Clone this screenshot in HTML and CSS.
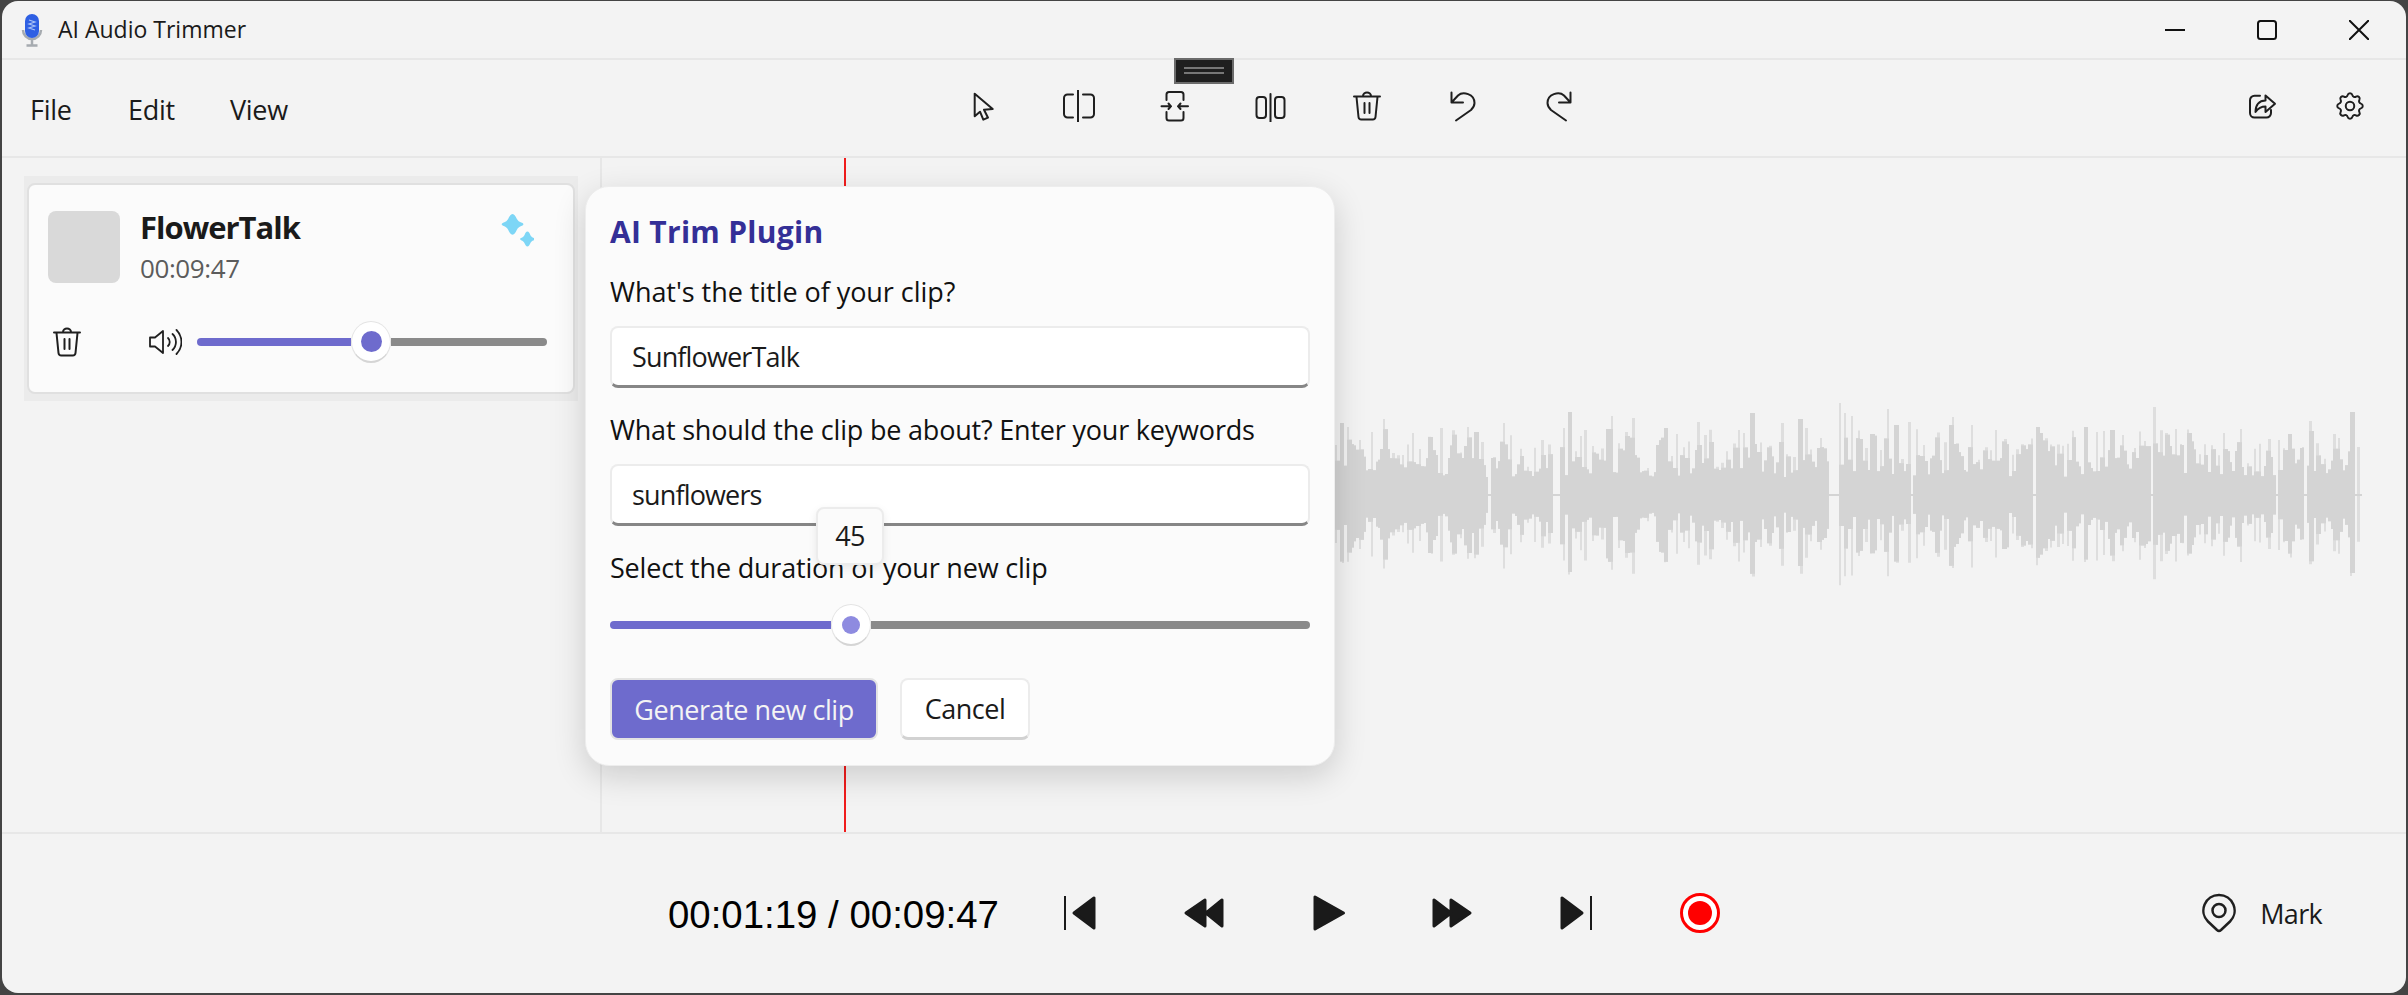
FILE: index.html
```html
<!DOCTYPE html>
<html lang="en">
<head>
    <meta charset="UTF-8">
    <meta name="viewport" content="width=device-width, initial-scale=1.0">
    <title>AI Audio Trimmer</title>
    <link rel="stylesheet" href="styles.css">
</head>
<body>
    <div class="window">
        <!-- Title bar -->
        <header class="titlebar">
            <svg class="app-icon" viewBox="0 0 24 34" width="24" height="34">
                <path d="M3 17a9 9 0 0 0 18 0M12 26v6M6.500 32.500h11" fill="none" stroke="#a6abb0" stroke-width="2.500"/>
                <rect x="5" y="1" width="14" height="24" rx="7" fill="#2e5fe3"/>
                <path d="M9 7l6 2-6 2 6 2-6 2 6 2" fill="none" stroke="#a9c2f5" stroke-width="1.200"/>
            </svg>
            <span class="app-name">AI Audio Trimmer</span>
            <div class="win-controls">
                <svg viewBox="0 0 20 20" width="20" height="20"><path d="M0 10h20" stroke="#111" stroke-width="2"/></svg>
                <svg viewBox="0 0 20 20" width="20" height="20"><rect x="1" y="1" width="18" height="18" rx="2.500" fill="none" stroke="#111" stroke-width="2"/></svg>
                <svg viewBox="0 0 20 20" width="20" height="20"><path d="M0 0l20 20M20 0L0 20" stroke="#111" stroke-width="2"/></svg>
            </div>
        </header>

        <!-- Toolbar -->
        <nav class="toolbar">
            <div class="grip"><span></span><span></span></div>
            <div class="menu">
                <span class="menu-file">File</span>
                <span class="menu-edit">Edit</span>
                <span>View</span>
            </div>
            <div class="tools">
                <svg class="icon" viewBox="0 0 32 32"><path d="M7.700 3.700V26.300L13 21.700 16.300 29.700 21 27.700 17 19.700 25.700 19Z"/></svg>
                <svg class="icon" viewBox="0 0 32 32"><path d="M15 0V32M10 4.500H4.500a3.500 3.500 0 0 0-3.500 3.500V24a3.500 3.500 0 0 0 3.500 3.500H10M20 4.500h7.500a3.500 3.500 0 0 1 3.500 3.500V24a3.500 3.500 0 0 1-3.500 3.500H20"/></svg>
                <svg class="icon" viewBox="0 0 32 32"><path d="M7.500 10V4.500A2.500 2.500 0 0 1 10 2h12A2.500 2.500 0 0 1 24.500 4.500V10M7.500 22v6A2.500 2.500 0 0 0 10 30.500h12A2.500 2.500 0 0 0 24.500 28V22M2.500 16.300H12M9.500 13.500 12 16.300 9.500 19M29 16.300H19M21.500 13.500 19 16.300 21.500 19"/></svg>
                <svg class="icon" viewBox="0 0 32 32"><rect x="1.500" y="7" width="9.500" height="21" rx="3"/><rect x="20" y="7" width="9.500" height="21" rx="3"/><path d="M15.500 4V32"/></svg>
                <svg class="icon" viewBox="0 0 32 32"><path d="M3 6.500H29M12 6a4 3.500 0 0 1 8 0M5.500 7l2 20a2.800 2.800 0 0 0 2.800 2.500H21.700a2.800 2.800 0 0 0 2.800-2.500l2-20M13.500 13V23M18.500 13V23"/></svg>
                <svg class="icon" viewBox="0 0 32 32"><path d="M4.500 2.500V12.500H16M4.500 12.500 11 5.500C16 1 27.500 4 27.500 13 27.500 16 26 18 24 20L9 30.500"/></svg>
                <svg class="icon" viewBox="0 0 32 32"><path d="M27.500 2.500V12.500H16M27.500 12.500 21 5.500C16 1 4.500 4 4.500 13 4.500 16 6 18 8 20L23 30.500"/></svg>
            </div>
            <div class="tools-right">
                <svg class="icon" viewBox="0 0 32 32"><path d="M14 5.700H8.500A4.500 4.500 0 0 0 4 10.200V23a4.500 4.500 0 0 0 4.500 4.500h12a4.500 4.500 0 0 0 4.500-4.500v-3M19.500 5.500v5C13 10.500 9.500 15 9.500 22c2.500-3.500 5.500-5.500 10-5.500V22L29 13.800Z"/></svg>
                <svg class="icon gear" viewBox="0 0 24 24"><path d="M10.325 4.317c.426 -1.756 2.924 -1.756 3.35 0a1.724 1.724 0 0 0 2.573 1.066c1.543 -.94 3.31 .826 2.37 2.37a1.724 1.724 0 0 0 1.065 2.572c1.756 .426 1.756 2.924 0 3.35a1.724 1.724 0 0 0 -1.066 2.573c.94 1.543 -.826 3.31 -2.37 2.37a1.724 1.724 0 0 0 -2.572 1.065c-.426 1.756 -2.924 1.756 -3.35 0a1.724 1.724 0 0 0 -2.573 -1.066c-1.543 .94 -3.31 -.826 -2.37 -2.37a1.724 1.724 0 0 0 -1.065 -2.572c-1.756 -.426 -1.756 -2.924 0 -3.350a1.724 1.724 0 0 0 1.066 -2.573c-.94 -1.543 .826 -3.31 2.37 -2.37c1 .608 2.296 .07 2.572 -1.065z"/><circle cx="12" cy="12" r="3"/></svg>
            </div>
        </nav>

        <!-- Main area -->
        <main class="main">
            <aside class="sidebar">
                <div class="card-wrap">
                    <div class="card">
                        <div class="card-top">
                            <div class="thumb"></div>
                            <div class="card-info">
                                <div class="card-title">FlowerTalk</div>
                                <div class="card-time">00:09:47</div>
                            </div>
                            <svg class="sparkle" viewBox="0 0 36 36" width="34" height="34">
                                <path transform="translate(-3 0) scale(1.250 1)" d="M13 1c1.600 0 2.600 2.400 3.600 5 .9 2.200 2 3.200 4.400 4.400 1.600.8 1.600 2.400 0 3.200-2.400 1.200-3.500 2.200-4.400 4.400-1 2.600-2 5-3.600 5s-2.600-2.400-3.600-5c-.9-2.200-2-3.200-4.400-4.400-1.600-.8-1.600-2.400 0-3.200 2.400-1.200 3.500-2.200 4.400-4.400C10.400 3.400 11.400 1 13 1Z"/>
                                <path transform="translate(18 19) scale(.85 .72)" d="M13 1c1.600 0 2.600 2.400 3.600 5 .9 2.200 2 3.200 4.400 4.400 1.600.8 1.600 2.400 0 3.200-2.400 1.200-3.500 2.200-4.400 4.400-1 2.600-2 5-3.600 5s-2.600-2.400-3.600-5c-.9-2.200-2-3.200-4.400-4.400-1.600-.8-1.600-2.400 0-3.200 2.400-1.200 3.500-2.200 4.400-4.400C10.400 3.400 11.400 1 13 1Z"/>
                            </svg>
                        </div>
                        <div class="card-bottom">
                            <svg class="icon card-trash" viewBox="0 0 32 32"><path d="M3 6.500H29M12 6a4 3.500 0 0 1 8 0M5.500 7l2 20a2.800 2.800 0 0 0 2.800 2.500H21.700a2.800 2.800 0 0 0 2.800-2.500l2-20M13.500 13V23M18.500 13V23"/></svg>
                            <svg class="icon volume" viewBox="0 0 34 32"><path d="M2 11.500H7L15 5V27L7 20.500H2ZM20 12a5.500 5.500 0 0 1 0 8M24.500 8a11 11 0 0 1 0 16M28.500 4a17 17 0 0 1 0 24"/></svg>
                            <div class="slider slider-volume">
                                <div class="fill"></div>
                                <div class="thumb-knob"><span></span></div>
                                <div class="rest"></div>
                            </div>
                        </div>
                    </div>
                </div>
            </aside>

            <section class="canvas">
                <div class="playhead"></div>
                <svg class="wave" id="wave" height="200"></svg>
            </section>

            <!-- Plugin popup -->
            <form class="panel">
                <h2>AI Trim Plugin</h2>
                <label class="first">What's the title of your clip?</label>
                <div class="input">SunflowerTalk</div>
                <label>What should the clip be about? Enter your keywords</label>
                <div class="input">sunflowers</div>
                <label>Select the duration of your new clip</label>
                <div class="tooltip">45</div>
                <div class="slider slider-duration">
                    <div class="fill"></div>
                    <div class="thumb-knob"><span></span></div>
                    <div class="rest"></div>
                </div>
                <div class="buttons">
                    <button type="button" class="btn-primary">Generate new clip</button>
                    <button type="button" class="btn-cancel">Cancel</button>
                </div>
            </form>
        </main>

        <!-- Transport bar -->
        <footer class="transport">
            <div class="time">00:01:19 / 00:09:47</div>
            <div class="controls">
                <svg class="ctl" viewBox="0 0 40 40"><path class="thin" d="M5 3V37"/><path d="M34 5V35L14 20Z"/></svg>
                <svg class="ctl" viewBox="0 0 40 40"><path d="M21 7V33L2 20ZM38 7V33L22 20Z"/></svg>
                <svg class="ctl" viewBox="0 0 40 40"><path d="M7 4V36L35.500 20Z"/></svg>
                <svg class="ctl" viewBox="0 0 40 40"><path d="M2 7V33L19 20ZM19 7V33L38 20Z"/></svg>
                <svg class="ctl" viewBox="0 0 40 40"><path class="thin" d="M35 3V37"/><path d="M6 5V35L26 20Z"/></svg>
                <svg class="ctl" viewBox="0 0 40 40"><circle class="ring" cx="20" cy="20" r="18.500"/><circle class="dot" cx="20" cy="20" r="12"/></svg>
            </div>
            <div class="mark">
                <svg class="icon mark-icon" viewBox="0 0 34 40"><path d="M17 2a15.500 15.500 0 0 1 11 26.500L19 37a3 3 0 0 1-4 0L6 28.500A15.500 15.500 0 0 1 17 2Z"/><circle cx="17" cy="17.500" r="6.500"/></svg>
                <span>Mark</span>
            </div>
        </footer>
    </div>
    <script src="wave.js"></script>
</body>
</html>
```

FILE: styles.css
```css
* {
    box-sizing: border-box;
}
html, body {
    height: 100%;
}
body {
    margin: 0;
    background-color: #444;
    overflow: hidden;
    font-family: "Open Sans", "Noto Sans", sans-serif;
    color: #1a1a1a;
}
.window {
    position: relative;
    display: flex;
    flex-direction: column;
    margin: 1px 2px 0;
    height: 992px;
    background-color: #f3f3f3;
    border-radius: 16px;
    overflow: hidden;
}

/* title bar */
.titlebar {
    display: flex;
    align-items: center;
    flex: 0 0 59px;
    border-bottom: 2px solid #e7e7e7;
    padding-left: 18px;
}
.app-icon {
    margin-right: 14px;
}
.app-name {
    font-size: 23px;
    margin-top: -1px;
}
.win-controls {
    display: flex;
    margin-left: auto;
    gap: 72px;
    padding-right: 37px;
}

/* toolbar */
.toolbar {
    position: relative;
    display: flex;
    align-items: center;
    flex: 0 0 98px;
    border-bottom: 2px solid #e7e7e7;
    padding-left: 28px;
}
.grip {
    position: absolute;
    left: 1172px;
    top: -2px;
    width: 60px;
    height: 26px;
    background-color: #1f1f1f;
    border: 2px solid #6b6b6b;
    padding: 7px 8px;
}
.grip span {
    display: block;
    height: 2px;
    background-color: #777;
    margin-bottom: 3px;
}
.menu {
    display: flex;
    width: 937px;
    font-size: 27px;
    letter-spacing: -0.3px;
    margin-top: 3px;
}
.menu-file {
    width: 98px;
}
.menu-edit {
    width: 102px;
}
.tools {
    display: flex;
    gap: 64px;
    margin-top: -4px;
}
.tools-right {
    display: flex;
    align-items: center;
    gap: 55px;
    margin-left: auto;
    padding-right: 39px;
    margin-top: -4px;
}
.icon {
    width: 32px;
    height: 32px;
    fill: none;
    stroke: #1f1f1f;
    stroke-width: 2;
    stroke-linejoin: round;
    stroke-linecap: round;
}
.icon.gear {
    width: 34px;
    height: 34px;
    stroke-width: 1.400;
}

/* main area */
.main {
    position: relative;
    display: flex;
    flex: 1;
    min-height: 0;
}
.sidebar {
    flex: 0 0 600px;
    border-right: 2px solid #e7e7e7;
    padding: 18px 0 0 22px;
}
.card-wrap {
    width: 554px;
    height: 225px;
    background-color: #ebebeb;
    padding: 7px 3px;
}
.card {
    height: 211px;
    background-color: #fbfbfb;
    border: 2px solid #e0e0e0;
    border-radius: 8px;
    padding: 26px 19px 0;
}
.card-top {
    display: flex;
    height: 72px;
}
.thumb {
    flex: 0 0 72px;
    background-color: #d9d9d9;
    border-radius: 8px;
    margin-right: 20px;
}
.card-info {
    flex: 1;
    margin-top: -7px;
}
.card-title {
    font-size: 31px;
    font-weight: 700;
    line-height: 46px;
    letter-spacing: -1px;
}
.card-time {
    font-size: 26px;
    line-height: 36px;
    color: #5c5c5c;
    letter-spacing: -0.4px;
}
.sparkle {
    fill: #7dd6f6;
    margin: 2px 20px 0 0;
}
.card-bottom {
    display: flex;
    align-items: center;
    margin-top: 39px;
    height: 40px;
}
.card-trash {
    margin-left: 3px;
}
.volume {
    width: 34px;
    margin-left: 65px;
    stroke-width: 1.800;
}
.slider {
    display: flex;
    align-items: center;
    height: 44px;
}
.slider .fill,
.slider .rest {
    height: 8px;
}
.slider .fill {
    background-color: #6e6bcd;
    border-radius: 4px 0 0 4px;
}
.slider .rest {
    flex: 1;
    background-color: #8a8a8a;
    border-radius: 0 4px 4px 0;
}
.thumb-knob {
    display: flex;
    align-items: center;
    justify-content: center;
    background-color: #fff;
    border: 1px solid #e4e4e4;
    border-bottom: 2px solid #d5d5d5;
    border-radius: 50%;
}
.thumb-knob span {
    display: block;
    border-radius: 50%;
    background-color: #6e6bcd;
}
.slider-volume {
    width: 350px;
    margin-left: 15px;
}
.slider-volume .fill {
    width: 154px;
}
.slider-volume .thumb-knob {
    width: 40px;
    height: 42px;
}
.slider-volume .thumb-knob span {
    width: 21px;
    height: 21px;
}
.slider-duration {
    margin: 15px 24px 0 0;
}
.slider-duration .fill {
    width: 221px;
}
.slider-duration .thumb-knob {
    width: 40px;
    height: 42px;
}
.slider-duration .thumb-knob span {
    width: 18px;
    height: 18px;
    background-color: #8e8be0;
}

/* waveform */
.canvas {
    position: relative;
    flex: 1;
    display: flex;
    align-items: center;
}
.playhead {
    position: absolute;
    left: 242px;
    top: 0;
    bottom: 0;
    width: 2px;
    background-color: #f01c1c;
}
.wave {
    width: 100%;
}

/* popup */
.panel {
    position: absolute;
    left: 583px;
    top: 28px;
    width: 750px;
    height: 580px;
    background-color: #fbfbfb;
    border: 1px solid #ededed;
    border-radius: 24px;
    box-shadow: 0 10px 32px rgba(0, 0, 0, 0.16);
    padding: 23px 0 0 24px;
}
.panel h2 {
    margin: 0;
    font-size: 30px;
    font-weight: 700;
    line-height: 44px;
    color: #342f97;
    letter-spacing: 0.3px;
}
.panel label {
    display: block;
    margin: 22px 0 14px;
    font-size: 27px;
    line-height: 40px;
    letter-spacing: -0.2px;
    color: #111;
}
.panel label.first {
    margin-top: 18px;
    letter-spacing: -0.05px;
}
.input {
    width: 700px;
    height: 62px;
    background-color: #fff;
    border: 2px solid #ececec;
    border-bottom: 3px solid #868686;
    border-radius: 8px;
    padding-left: 20px;
    font-size: 27px;
    line-height: 58px;
    letter-spacing: -0.85px;
}
.tooltip {
    position: absolute;
    left: 230px;
    top: 320px;
    width: 68px;
    height: 58px;
    background-color: #fbfbfb;
    border: 2px solid #ececec;
    border-radius: 8px;
    box-shadow: 0 3px 8px rgba(0, 0, 0, 0.08);
    font-size: 27px;
    line-height: 54px;
    text-align: center;
    letter-spacing: -0.6px;
}
.buttons {
    display: flex;
    gap: 22px;
    margin-top: 31px;
}
.buttons button {
    height: 62px;
    border-radius: 8px;
    font-family: inherit;
    font-size: 27px;
    padding: 0;
}
.btn-primary {
    width: 268px;
    background-color: #6e6bcd;
    border: 2px solid #e3e3e3;
    color: #f4f4f4;
    letter-spacing: -0.45px;
}
.btn-cancel {
    width: 130px;
    background-color: #fff;
    border: 2px solid #ececec;
    border-bottom: 3px solid #d2d2d2;
    color: #1a1a1a;
    letter-spacing: -0.5px;
}

/* transport */
.transport {
    display: flex;
    align-items: center;
    flex: 0 0 161px;
    border-top: 2px solid #e7e7e7;
    padding-left: 666px;
    padding-bottom: 1px;
}
.time {
    width: 392px;
    font-family: "Liberation Sans", Arial, sans-serif;
    font-size: 38.400px;
    color: #000;
    margin-top: 4px;
}
.controls {
    display: flex;
    gap: 84px;
}
.ctl {
    width: 40px;
    height: 40px;
    fill: #1a1a1a;
    stroke: #1a1a1a;
    stroke-width: 3;
    stroke-linejoin: round;
}
.ctl .thin {
    fill: none;
    stroke-width: 2;
}
.ctl .ring {
    fill: #fff;
    stroke: #f00;
    stroke-width: 3;
}
.ctl .dot {
    fill: #f00;
    stroke: none;
}
.mark {
    display: flex;
    align-items: center;
    gap: 24px;
    margin-left: auto;
    padding-right: 84px;
    font-size: 27px;
    letter-spacing: -0.7px;
}
.mark-icon {
    width: 34px;
    height: 40px;
    stroke-width: 2.500;
}
```

FILE: wave.js
```js
// Tekent de waveform: vaste pieken + ruis met een vaste seed
const svg = document.getElementById('wave');
const originX = 602;
const centerY = 100;

// x op de pagina, hoogte van de piek
const peaks = [
    [1341, 72], [1347, 68], [1370, 63], [1383, 76], [1411, 62], [1430, 58], [1441, 67],
    [1467, 68], [1475, 63], [1489, 75], [1503, 72], [1541, 55], [1563, 67], [1569, 83],
    [1585, 65], [1607, 66], [1611, 79], [1627, 59], [1632, 77], [1665, 67], [1675, 61],
    [1698, 73], [1742, 62], [1751, 82], [1781, 72], [1799, 76], [1805, 67], [1819, 57],
    [1839, 92], [1843, 82], [1851, 79], [1861, 56], [1871, 61], [1886, 86], [1895, 70],
    [1909, 73], [1949, 70], [1952, 78], [1971, 70], [1994, 65], [2005, 56], [2037, 68],
    [2041, 62], [2085, 68], [2111, 65], [2153, 88], [2166, 62], [2175, 66], [2190, 62],
    [2223, 62], [2277, 55], [2289, 61], [2309, 74], [2334, 61], [2351, 83]
];

// stille stukjes, alleen een dun lijntje
const gaps = [
    [1552, 1558], [1829, 1836], [1487, 1488], [1734, 1735], [1910, 1912], [2033, 2034],
    [2082, 2083], [2149, 2151], [2185, 2186], [2275, 2276], [2303, 2304], [2329, 2330],
    [2355, 2356], [2359, 2362]
];

let seed = 12345;
function rnd() {
    seed = (seed * 16807) % 2147483647;
    return seed / 2147483647;
}

const bars = [];
for (let x = 1330; x < 2362; x += 2.4) {
    const px = Math.round(x);
    let amp = 30 + rnd() * 22;
    const r = rnd();
    if (r < 0.25) amp = 18 + rnd() * 12;
    else if (r > 0.8) amp = 50 + rnd() * 16;

    const peak = peaks.find(p => Math.abs(p[0] - px) <= 1);
    if (peak) amp = peak[1];
    if (gaps.some(g => px >= g[0] && px <= g[1])) amp = 1;
    if (px > 2352 && px < 2355) amp = 26;

    bars.push({ x: px - originX, up: amp, down: amp * (0.92 + rnd() * 0.12) });
}

let light = '';
let dark = '';
bars.forEach((b, i) => {
    const prev = bars[i - 1] || b;
    const next = bars[i + 1] || b;
    const w = next.x - b.x || 2;
    const maxUp = Math.min(b.up, Math.max(prev.up, next.up));
    const maxDown = Math.min(b.down, Math.max(prev.down, next.down));
    light += `M${b.x} ${centerY - b.up}h${w}V${centerY + b.down}h${-w}Z`;
    dark += `M${b.x} ${centerY - maxUp}h${w}V${centerY + maxDown}h${-w}Z`;
});

svg.innerHTML = `<path d="${light}" fill="#dedede"/><path d="${dark}" fill="#d4d4d4"/>`;
```
